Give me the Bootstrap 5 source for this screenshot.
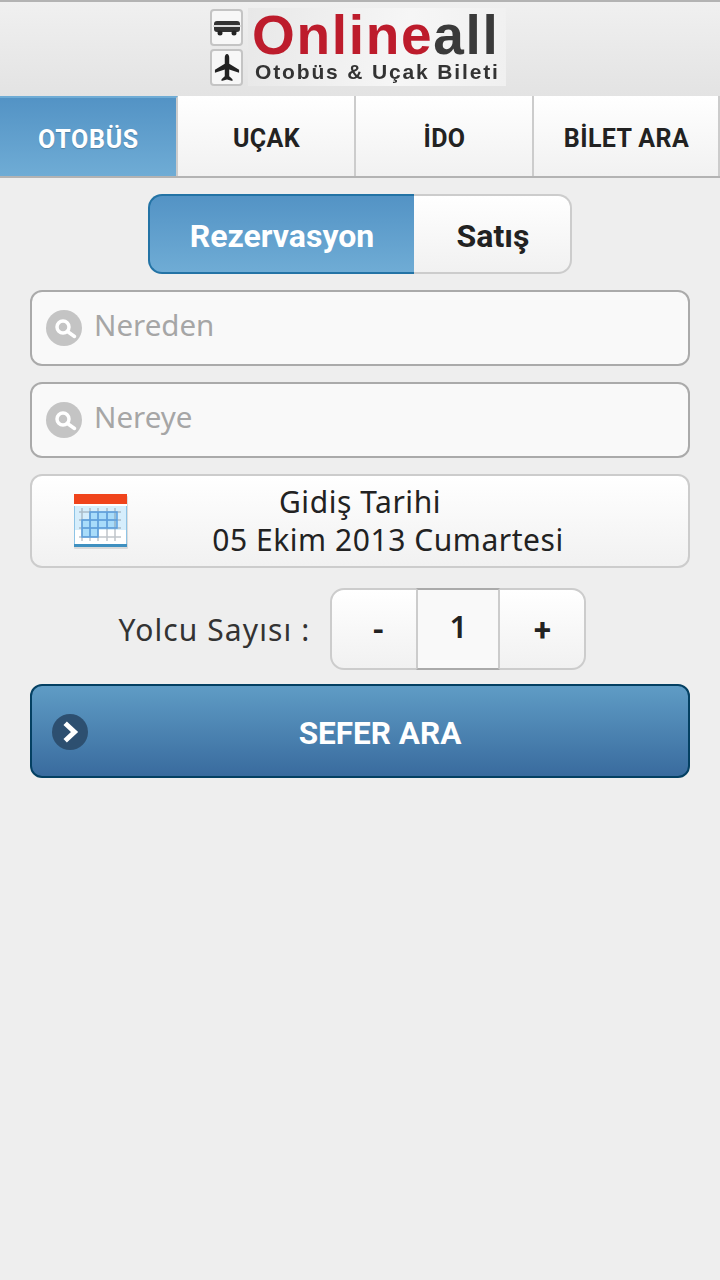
<!DOCTYPE html>
<html lang="tr">
<head>
<meta charset="utf-8">
<title>Onlineall</title>
<link rel="stylesheet" href="https://cdn.jsdelivr.net/npm/bootstrap@5.3.0/dist/css/bootstrap.min.css">
<style>
html,body{height:100%}
body{background:#eee;font-family:Roboto,"Liberation Sans",sans-serif;color:#222;width:720px;height:1280px;overflow:hidden}
.top-head{height:96px;border-top:2px solid #b3b3b3;background:linear-gradient(#f0f0f0,#e3e3e3)}
.logo-box{width:296px;height:78px;margin-left:210px;margin-top:6px}
.logo-icons{width:38px;gap:3px;padding-top:1px}
.logo-ic{width:33px;height:37px;border:2px solid #c4c4c4;border-radius:4px;background:#f7f7f7}
.logo-text{flex:1;padding-left:4px;background:linear-gradient(100deg,#e8e8e8,#f6f6f6 60%,#f0f0f0);filter:blur(.6px)}
.logo-main{font-family:"Liberation Sans",sans-serif;font-size:55px;line-height:54px;font-weight:700;color:#bd1c2c;letter-spacing:1.7px;white-space:nowrap}
.logo-main span{color:#3a3a3a}
.logo-sub{font-family:"Liberation Sans",sans-serif;font-size:21px;line-height:20px;font-weight:700;color:#333;white-space:nowrap;padding-left:3px;letter-spacing:1.85px}
.tabbar{height:82px;border-bottom:2px solid #b3b3b3}
.tab-item{width:178px;height:80px;padding:6px 0 0 1px;background:linear-gradient(#fff,#f1f1f1);border-right:2px solid #ccc;font-size:25px;font-weight:700;letter-spacing:.4px;color:#222;text-decoration:none}
.tab-item:last-child{width:186px}
.tab-on{background:linear-gradient(#5393c5,#6facd5);border-top:2px solid #6facd5;border-right-color:#ccc;color:#fff;letter-spacing:.7px;text-shadow:0 1px 1px rgba(0,0,0,.2)}
.seg{margin-top:16px;height:80px}
.seg-a{width:266px;height:80px;padding-top:4px;border:2px solid #2373a5;border-right:0;border-radius:14px 0 0 14px;background:linear-gradient(#5393c5,#6facd5);color:#fff;font-size:32px;font-weight:700}
.seg-b{width:158px;height:80px;padding:4px 0 0 2px;border:2px solid #ccc;border-left:0;border-radius:0 14px 14px 0;background:linear-gradient(#fff,#f1f1f1);color:#222;font-size:32px;font-weight:700}
.form-zone{padding:16px 30px 0}
.search-box{height:76px;border:2px solid #aaa;border-radius:12px;background:#f9f9f9;margin-bottom:16px;padding-left:14px;gap:12px;font-family:"Noto Sans",sans-serif;font-size:29.500px;color:#a6a6a6}
.search-box span{line-height:1;padding-bottom:6px}
.date-box{height:94px;border:2px solid #ccc;border-radius:12px;background:linear-gradient(#fff,#f1f1f1);font-family:"Noto Sans",sans-serif;font-size:30px;line-height:38px;letter-spacing:.55px;color:#222}
.date-line2{padding-left:56px}
.date-ic{left:41px;top:18px}
.count-row{height:82px;margin-top:20px}
.count-lab{font-family:"Noto Sans",sans-serif;font-size:30px;letter-spacing:1.1px;color:#333;margin-right:20px;margin-left:-15px}
.stepper{width:256px;height:82px;border:2px solid #ccc;border-radius:14px;background:linear-gradient(#fff,#f1f1f1);font-weight:700;font-size:31px}
.step-b{width:84px;padding:4px 0 0 8px}
.step-v{width:84px;background:#f9f9f9;border:solid #aaa;border-width:2px 0;border-left:2px solid #ccc;border-right:2px solid #ccc;margin-top:-2px;margin-bottom:-2px;font-family:"Noto Sans",sans-serif;font-size:31px;font-weight:600;padding-bottom:6px}
.step-p{flex:1;padding-top:4px}
.go-btn{height:94px;margin-top:14px;padding-top:6px;border:2px solid #044062;border-radius:12px;background:linear-gradient(#5f9cc5,#396b9e);color:#fff;font-size:31.500px;font-weight:700;padding-left:40px}
.go-ic{left:20px;top:28px}
</style>
</head>
<body>
<header class="top-head">
  <div class="logo-box d-flex">
    <div class="logo-icons d-flex flex-column">
      <div class="logo-ic d-flex align-items-center justify-content-center">
        <svg width="28" height="16" viewBox="0 0 28 16"><rect x="1" y="1" width="26" height="11" rx="3" fill="#333"/><rect x="0" y="5" width="28" height="2" fill="#ddd"/><circle cx="7" cy="13" r="2.500" fill="#222"/><circle cx="21" cy="13" r="2.500" fill="#222"/></svg>
      </div>
      <div class="logo-ic d-flex align-items-center justify-content-center">
        <svg width="26" height="30" viewBox="0 0 28 32"><path d="M14 1c1.600 0 2.400 2 2.400 4v6.500L27 18v3l-10.600-3.500V25l3.500 3v2L14 28.500 8.100 30v-2l3.500-3v-7.500L1 21v-3l10.600-6.500V5c0-2 .8-4 2.400-4z" fill="#222"/></svg>
      </div>
    </div>
    <div class="logo-text">
      <div class="logo-main">Online<span>all</span></div>
      <div class="logo-sub">Otobüs &amp; Uçak Bileti</div>
    </div>
  </div>
</header>
<nav class="tabbar d-flex">
  <a class="tab-item tab-on d-flex align-items-center justify-content-center">OTOBÜS</a>
  <a class="tab-item d-flex align-items-center justify-content-center">UÇAK</a>
  <a class="tab-item d-flex align-items-center justify-content-center">İDO</a>
  <a class="tab-item d-flex align-items-center justify-content-center">BİLET ARA</a>
</nav>
<div class="seg d-flex justify-content-center">
  <div class="seg-a d-flex align-items-center justify-content-center">Rezervasyon</div>
  <div class="seg-b d-flex align-items-center justify-content-center">Satış</div>
</div>
<main class="form-zone">
  <div class="search-box d-flex align-items-center">
    <svg width="36" height="36" viewBox="0 0 36 36"><circle cx="18" cy="18" r="18" fill="#c4c4c4"/><circle cx="17" cy="17" r="6" fill="none" stroke="#fff" stroke-width="3.500"/><path d="M21.500 21.500l7 5" stroke="#fff" stroke-width="3.500" stroke-linecap="round"/></svg>
    <span>Nereden</span>
  </div>
  <div class="search-box d-flex align-items-center">
    <svg width="36" height="36" viewBox="0 0 36 36"><circle cx="18" cy="18" r="18" fill="#c4c4c4"/><circle cx="17" cy="17" r="6" fill="none" stroke="#fff" stroke-width="3.500"/><path d="M21.500 21.500l7 5" stroke="#fff" stroke-width="3.500" stroke-linecap="round"/></svg>
    <span>Nereye</span>
  </div>
  <div class="date-box position-relative d-flex flex-column align-items-center justify-content-center text-center">
    <svg class="date-ic position-absolute" width="56" height="56" viewBox="0 0 56 56">
      <rect x="1" y="2" width="54" height="53" rx="1" fill="#bbb" opacity=".45"/>
      <rect x="1" y="0" width="53" height="53" fill="#fff"/>
      <rect x="1" y="0" width="53" height="10" fill="#f0441c"/>
      <rect x="2" y="12" width="51" height="24" fill="#d6eefc"/>
      <path d="M17 18h27v16H25v9H9V26h8z" fill="#a9dcfa"/>
      <path d="M6 18h42M6 26h42M6 34h42M6 43h42M9 14v33M17 14v33M25 14v33M34 14v33M42 14v33" stroke="#808b95" stroke-width="1.500" opacity=".5" fill="none"/>
      <path d="M17 18h27v16H25v9H9V26h8zM17 18v25M25 18v16M34 18v16M9 26h35M9 34h16" fill="none" stroke="#5a9fe0" stroke-width="1.500"/>
      <path d="M1.500 12v39.500h52V12" fill="none" stroke="#8ec4e6" stroke-width="1"/>
      <rect x="1" y="50" width="53" height="3" fill="#3f90c0"/>
    </svg>
    <div>Gidiş Tarihi</div>
    <div class="date-line2">05 Ekim 2013 Cumartesi</div>
  </div>
  <div class="count-row d-flex justify-content-center align-items-center">
    <span class="count-lab">Yolcu Sayısı :</span>
    <div class="stepper d-flex">
      <div class="step-b d-flex align-items-center justify-content-center">-</div>
      <div class="step-v d-flex align-items-center justify-content-center">1</div>
      <div class="step-p d-flex align-items-center justify-content-center">+</div>
    </div>
  </div>
  <div class="go-btn position-relative d-flex align-items-center justify-content-center">
    <svg class="go-ic position-absolute" width="36" height="36" viewBox="0 0 36 36"><circle cx="18" cy="18" r="18" fill="#2d4f70"/><path d="M15 11l7.500 7-7.500 7" fill="none" stroke="#fff" stroke-width="5" stroke-linecap="square"/></svg>
    SEFER ARA
  </div>
</main>
</body>
</html>
